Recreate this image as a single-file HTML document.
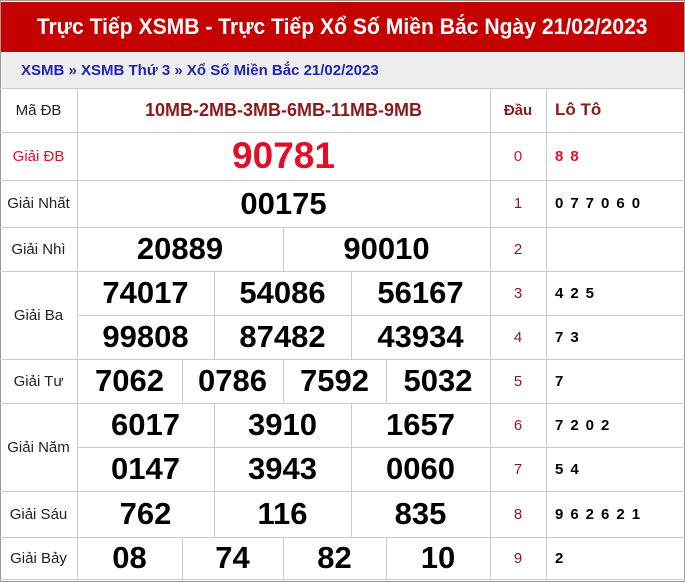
<!DOCTYPE html><html><head><meta charset="utf-8"><style>
body{margin:0;width:685px;height:582px;overflow:hidden;background:#fff;font-family:"Liberation Sans",sans-serif;position:relative}
.c{position:absolute;display:flex;align-items:center;justify-content:center;box-sizing:border-box}
.c span{display:inline-block;white-space:nowrap}
.n{font-weight:bold;font-size:31px;color:#000}
.l{font-size:15px;color:#222}
.d{font-size:15px;color:#8b1a1a}
.t{font-weight:bold;font-size:15px;color:#000;justify-content:flex-start;padding-left:9px}
.t span{letter-spacing:7px}
.h{position:absolute;height:1px;background:#ccc}
.v{position:absolute;width:1px;background:#ccc}
</style></head><body>
<div style="position:absolute;left:0;top:0;width:685px;height:582px;border:1px solid #999;box-sizing:border-box"></div>
<div class="c" style="left:1px;top:2px;width:683px;height:50px;background:#c40000;color:#fff;font-weight:bold;font-size:22px"><span style="transform:scaleX(.96)">Trực Tiếp XSMB - Trực Tiếp Xổ Số Miền Bắc Ngày 21/02/2023</span></div>
<div class="c" style="left:1px;top:52px;width:683px;height:36px;background:#eee;justify-content:flex-start;padding-left:20px;color:#2424b0;font-weight:bold;font-size:15px"><span>XSMB » XSMB Thứ 3 » Xổ Số Miền Bắc 21/02/2023</span></div>
<div class="h" style="left:0;top:88px;width:685px"></div>
<div class="h" style="left:0;top:132px;width:685px"></div>
<div class="h" style="left:0;top:180px;width:685px"></div>
<div class="h" style="left:0;top:227px;width:685px"></div>
<div class="h" style="left:0;top:271px;width:685px"></div>
<div class="h" style="left:77px;top:315px;width:608px"></div>
<div class="h" style="left:0;top:359px;width:685px"></div>
<div class="h" style="left:0;top:403px;width:685px"></div>
<div class="h" style="left:77px;top:447px;width:608px"></div>
<div class="h" style="left:0;top:491px;width:685px"></div>
<div class="h" style="left:0;top:537px;width:685px"></div>
<div class="h" style="left:0;top:579px;width:685px"></div>
<div class="v" style="left:77px;top:88px;height:492px"></div>
<div class="v" style="left:490px;top:88px;height:492px"></div>
<div class="v" style="left:546px;top:88px;height:492px"></div>
<div class="v" style="left:283px;top:227px;height:44px"></div>
<div class="v" style="left:214px;top:271px;height:88px"></div>
<div class="v" style="left:351px;top:271px;height:88px"></div>
<div class="v" style="left:182px;top:359px;height:44px"></div>
<div class="v" style="left:283px;top:359px;height:44px"></div>
<div class="v" style="left:386px;top:359px;height:44px"></div>
<div class="v" style="left:214px;top:403px;height:134px"></div>
<div class="v" style="left:351px;top:403px;height:134px"></div>
<div class="v" style="left:182px;top:537px;height:44px"></div>
<div class="v" style="left:283px;top:537px;height:44px"></div>
<div class="v" style="left:386px;top:537px;height:44px"></div>
<div class="c l" style="left:0;top:88px;width:77px;height:44px"><span>Mã ĐB</span></div>
<div class="c l" style="left:0;top:132px;width:77px;height:48px;color:#e0102a"><span>Giải ĐB</span></div>
<div class="c l" style="left:0;top:180px;width:77px;height:47px"><span>Giải Nhất</span></div>
<div class="c l" style="left:0;top:227px;width:77px;height:44px"><span>Giải Nhì</span></div>
<div class="c l" style="left:0;top:271px;width:77px;height:88px"><span>Giải Ba</span></div>
<div class="c l" style="left:0;top:359px;width:77px;height:44px"><span>Giải Tư</span></div>
<div class="c l" style="left:0;top:403px;width:77px;height:88px"><span>Giải Năm</span></div>
<div class="c l" style="left:0;top:491px;width:77px;height:46px"><span>Giải Sáu</span></div>
<div class="c l" style="left:0;top:537px;width:77px;height:42px"><span>Giải Bảy</span></div>
<div class="c" style="left:77px;top:88px;width:413px;height:44px;color:#8b1a1a;font-weight:bold;font-size:18px"><span>10MB-2MB-3MB-6MB-11MB-9MB</span></div>
<div class="c n" style="left:77px;top:132px;width:413px;height:48px;color:#e0102a;font-size:37px"><span>90781</span></div>
<div class="c n" style="left:77px;top:180px;width:413px;height:47px"><span>00175</span></div>
<div class="c n" style="left:77px;top:227px;width:206px;height:44px"><span>20889</span></div>
<div class="c n" style="left:283px;top:227px;width:207px;height:44px"><span>90010</span></div>
<div class="c n" style="left:77px;top:271px;width:137px;height:44px"><span>74017</span></div>
<div class="c n" style="left:214px;top:271px;width:137px;height:44px"><span>54086</span></div>
<div class="c n" style="left:351px;top:271px;width:139px;height:44px"><span>56167</span></div>
<div class="c n" style="left:77px;top:315px;width:137px;height:44px"><span>99808</span></div>
<div class="c n" style="left:214px;top:315px;width:137px;height:44px"><span>87482</span></div>
<div class="c n" style="left:351px;top:315px;width:139px;height:44px"><span>43934</span></div>
<div class="c n" style="left:77px;top:359px;width:105px;height:44px"><span>7062</span></div>
<div class="c n" style="left:182px;top:359px;width:101px;height:44px"><span>0786</span></div>
<div class="c n" style="left:283px;top:359px;width:103px;height:44px"><span>7592</span></div>
<div class="c n" style="left:386px;top:359px;width:104px;height:44px"><span>5032</span></div>
<div class="c n" style="left:77px;top:403px;width:137px;height:44px"><span>6017</span></div>
<div class="c n" style="left:214px;top:403px;width:137px;height:44px"><span>3910</span></div>
<div class="c n" style="left:351px;top:403px;width:139px;height:44px"><span>1657</span></div>
<div class="c n" style="left:77px;top:447px;width:137px;height:44px"><span>0147</span></div>
<div class="c n" style="left:214px;top:447px;width:137px;height:44px"><span>3943</span></div>
<div class="c n" style="left:351px;top:447px;width:139px;height:44px"><span>0060</span></div>
<div class="c n" style="left:77px;top:491px;width:137px;height:46px"><span>762</span></div>
<div class="c n" style="left:214px;top:491px;width:137px;height:46px"><span>116</span></div>
<div class="c n" style="left:351px;top:491px;width:139px;height:46px"><span>835</span></div>
<div class="c n" style="left:77px;top:537px;width:105px;height:42px"><span>08</span></div>
<div class="c n" style="left:182px;top:537px;width:101px;height:42px"><span>74</span></div>
<div class="c n" style="left:283px;top:537px;width:103px;height:42px"><span>82</span></div>
<div class="c n" style="left:386px;top:537px;width:104px;height:42px"><span>10</span></div>
<div class="c" style="left:490px;top:88px;width:56px;height:44px;color:#8b1a1a;font-weight:bold;font-size:15px"><span>Đầu</span></div>
<div class="c" style="left:546px;top:88px;width:139px;height:44px;color:#8b1a1a;font-weight:bold;font-size:17px;justify-content:flex-start;padding-left:9px"><span>Lô Tô</span></div>
<div class="c d" style="left:490px;top:132px;width:56px;height:48px;color:#e0102a"><span>0</span></div>
<div class="c d" style="left:490px;top:180px;width:56px;height:47px"><span>1</span></div>
<div class="c d" style="left:490px;top:227px;width:56px;height:44px"><span>2</span></div>
<div class="c d" style="left:490px;top:271px;width:56px;height:44px"><span>3</span></div>
<div class="c d" style="left:490px;top:315px;width:56px;height:44px"><span>4</span></div>
<div class="c d" style="left:490px;top:359px;width:56px;height:44px"><span>5</span></div>
<div class="c d" style="left:490px;top:403px;width:56px;height:44px"><span>6</span></div>
<div class="c d" style="left:490px;top:447px;width:56px;height:44px"><span>7</span></div>
<div class="c d" style="left:490px;top:491px;width:56px;height:46px"><span>8</span></div>
<div class="c d" style="left:490px;top:537px;width:56px;height:42px"><span>9</span></div>
<div class="c t" style="left:546px;top:132px;width:139px;height:48px;color:#e0102a"><span>88</span></div>
<div class="c t" style="left:546px;top:180px;width:139px;height:47px"><span>077060</span></div>
<div class="c t" style="left:546px;top:271px;width:139px;height:44px"><span>425</span></div>
<div class="c t" style="left:546px;top:315px;width:139px;height:44px"><span>73</span></div>
<div class="c t" style="left:546px;top:359px;width:139px;height:44px"><span>7</span></div>
<div class="c t" style="left:546px;top:403px;width:139px;height:44px"><span>7202</span></div>
<div class="c t" style="left:546px;top:447px;width:139px;height:44px"><span>54</span></div>
<div class="c t" style="left:546px;top:491px;width:139px;height:46px"><span>962621</span></div>
<div class="c t" style="left:546px;top:537px;width:139px;height:42px"><span>2</span></div>
</body></html>
